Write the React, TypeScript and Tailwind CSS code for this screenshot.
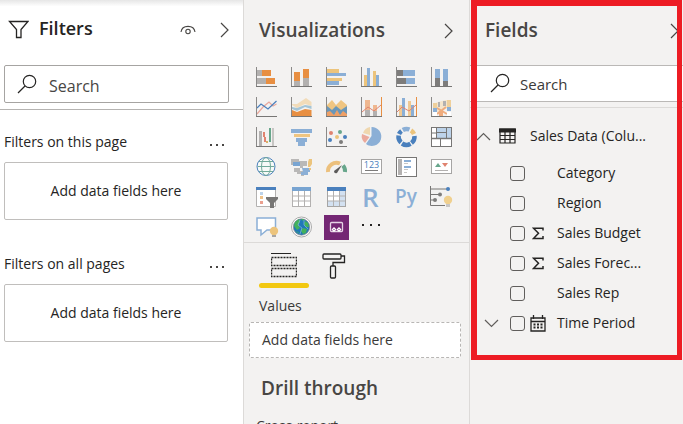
import type { ReactNode } from "react";

const BLUE = "#8bafd6";
const DEEP = "#4a80bd";
const ORANGE = "#e88f42";
const YELLOW = "#ecc47c";
const GRAY = "#b3b1b0";
const DARK = "#7d7c7b";
const PINK = "#e0836f";
const GREEN = "#67a68b";

type RectSpec = [number, number, number, number, string];

function Rects({ items }: { items: RectSpec[] }) {
  return (
    <>
      {items.map(([x, y, w, h, fill], i) => (
        <rect key={i} x={x} y={y} width={w} height={h} fill={fill} />
      ))}
    </>
  );
}

function Axis() {
  return (
    <>
      <rect x="0" y="0" width="1" height="20" fill="#8a8988" />
      <rect x="0" y="19" width="21" height="1" fill="#777675" />
    </>
  );
}

const visuals: { name: string; art: ReactNode }[] = [
  {
    name: "Stacked bar chart",
    art: (
      <>
        <Rects items={[[1, 3, 5, 6, GRAY], [6, 3, 9, 6, ORANGE], [1, 11, 9, 6, GRAY], [10, 11, 9, 6, ORANGE]]} />
        <Axis />
      </>
    ),
  },
  {
    name: "Stacked column chart",
    art: (
      <>
        <Rects items={[[3, 5, 6, 9, ORANGE], [3, 14, 6, 5, GRAY], [12, 2, 6, 9, ORANGE], [12, 11, 6, 8, GRAY]]} />
        <Axis />
      </>
    ),
  },
  {
    name: "Clustered bar chart",
    art: (
      <>
        <Rects items={[[1, 2, 12, 4, YELLOW], [1, 6, 19, 3, BLUE], [1, 11, 15, 3, YELLOW], [1, 14, 12, 4, BLUE]]} />
        <Axis />
      </>
    ),
  },
  {
    name: "Clustered column chart",
    art: (
      <>
        <Rects items={[[3, 8, 3, 11, YELLOW], [6, 1, 3, 18, BLUE], [12, 4, 3, 15, YELLOW], [15, 8, 3, 11, BLUE]]} />
        <Axis />
      </>
    ),
  },
  {
    name: "100% stacked bar chart",
    art: (
      <>
        <Rects items={[[1, 3, 6, 6, DARK], [7, 3, 12, 6, BLUE], [1, 11, 9, 6, DARK], [10, 11, 9, 6, BLUE]]} />
        <Axis />
      </>
    ),
  },
  {
    name: "100% stacked column chart",
    art: (
      <>
        <Rects items={[[4, 2, 5, 9, BLUE], [4, 11, 5, 8, DARK], [12, 2, 5, 12, BLUE], [12, 14, 5, 5, DARK]]} />
        <Axis />
      </>
    ),
  },
  {
    name: "Line chart",
    art: (
      <>
        <path d="M1 17 7 10 13 5 17 9 20.500 7" fill="none" stroke="#e9a79b" strokeWidth="1.200" />
        <path d="M1 11 5 7 12 12 20.500 4" fill="none" stroke={DEEP} strokeWidth="1.200" />
        <Axis />
      </>
    ),
  },
  {
    name: "Area chart",
    art: (
      <>
        <path d="M1 7 6 7 15 1 20.500 5V9L14 7 6 11 1 8Z" fill="#f2dcb9" />
        <path d="M1 10 6 11 14 8 20.500 9V12L14 10 6 14 1 12Z" fill="#a5c5d6" />
        <path d="M1 13 6 15 14 12 20.500 13V19H1Z" fill={ORANGE} />
        <Axis />
      </>
    ),
  },
  {
    name: "Stacked area chart",
    art: (
      <>
        <path d="M1 8 6 3 10 8 15 3 21 8V19H1Z" fill="#efc581" />
        <path d="M1 9 6 13 10 9 15 13 21 9V19H1Z" fill="#6a97b9" />
        <path d="M1 15 4 14 8 18 11 13 14 18 17 14 21 17V19H1Z" fill="#efa066" />
        <Axis />
      </>
    ),
  },
  {
    name: "Line and stacked column chart",
    art: (
      <>
        <Rects items={[[4, 3, 5, 10, "#efb78f"], [4, 13, 5, 6, GRAY], [12, 8, 4, 6, "#efb78f"], [12, 14, 4, 5, GRAY], [20, 0, 1, 19, ORANGE]]} />
        <path d="M1 15 7 10 13 14 20 8" fill="none" stroke={PINK} />
        <Axis />
      </>
    ),
  },
  {
    name: "Line and clustered column chart",
    art: (
      <>
        <Rects items={[[3, 8, 3, 11, "#f0c993"], [6, 1, 3, 18, BLUE], [12, 4, 3, 15, "#f0c993"], [15, 8, 3, 11, BLUE], [20, 0, 1, 19, ORANGE]]} />
        <path d="M1 15 6 10 13 14 20 8" fill="none" stroke={PINK} />
        <Axis />
      </>
    ),
  },
  {
    name: "Ribbon chart",
    art: (
      <>
        <path d="M2 7 7 5 15 3H20V10L16 11 9 15H2Z" fill="#f5e5cb" />
        <path d="M6 11 16 17M6 17 15 10" stroke="#efac7e" strokeWidth="2" />
        <Rects
          items={[
            [2, 6, 4, 5, "#efd09b"], [2, 11, 4, 4, BLUE], [2, 15, 4, 4, "#ffffff"],
            [7, 5, 2, 5, GRAY], [12, 4, 3, 5, GRAY], [8, 14, 4, 5, "#efac7e"],
            [16, 3, 4, 7, "#efd09b"], [16, 10, 4, 4, BLUE], [16, 15, 4, 4, "#ffffff"],
          ]}
        />
        <Axis />
      </>
    ),
  },
  {
    name: "Waterfall chart",
    art: (
      <>
        <Rects items={[[3, 4, 3, 15, GRAY], [7, 5, 2, 5, PINK], [8, 10, 2, 5, PINK], [10, 14, 2, 2, "#d8b269"], [13, 1, 2, 14, GREEN], [16, 1, 2, 18, "#c8c6c4"]]} />
        <Axis />
      </>
    ),
  },
  {
    name: "Funnel chart",
    art: <Rects items={[[0, 2, 21, 4, BLUE], [3, 7, 16, 3, "#efc581"], [5, 11, 11, 4, BLUE], [7, 15, 7, 4, BLUE]]} />,
  },
  {
    name: "Scatter chart",
    art: (
      <>
        <circle cx="5" cy="6" r="2" fill={PINK} />
        <circle cx="14" cy="5" r="2" fill={GREEN} />
        <circle cx="11" cy="10" r="2" fill={YELLOW} />
        <circle cx="19" cy="10" r="2" fill={DEEP} />
        <circle cx="4" cy="13" r="2" fill={DEEP} />
        <circle cx="15" cy="15" r="2" fill={DARK} />
        <Axis />
      </>
    ),
  },
  {
    name: "Pie chart",
    art: (
      <>
        <path d="M10.500 9V0A9.500 9.500 0 1 1 5 17Z" fill={BLUE} />
        <path d="M9 8 2 6A9 9 0 0 1 9 0Z" fill="#efd7ae" />
        <path d="M8.500 10 4 16A9 9 0 0 1 1 7Z" fill="#eba99c" />
      </>
    ),
  },
  {
    name: "Donut chart",
    art: (
      <g fill="none" strokeWidth="4.500">
        <path d="M6.800 3A8 8 0 0 1 13.500 2.500" stroke={BLUE} />
        <path d="M15 3.500A8 8 0 0 1 18 7" stroke={YELLOW} />
        <path d="M18.500 9A8 8 0 0 1 15.500 16" stroke={DEEP} />
        <path d="M14.500 16.700A8 8 0 0 1 6 16.500" stroke={DEEP} />
        <path d="M5 15.500A8 8 0 0 1 2.600 8.500" stroke={DEEP} />
        <path d="M3 7A8 8 0 0 1 5.500 4" stroke={DEEP} />
      </g>
    ),
  },
  {
    name: "Treemap",
    art: (
      <>
        <rect x=".500" y=".500" width="20" height="19" fill="#fff" stroke="#777675" />
        <rect x="6" y="1" width="14" height="10" fill="#bdd3ea" />
        <path d="M5.500 0V11M5.500 5.500H15.500M15.500 0V11M1 6H5M9.500 11V20" stroke="#777675" fill="none" />
        <path d="M0 11.500H21" stroke="#777675" strokeWidth="1.500" />
      </>
    ),
  },
  {
    name: "Map",
    art: (
      <>
        <circle cx="10" cy="9.500" r="9" fill="#f7faf8" stroke={DEEP} />
        <g fill="none" stroke="#72aa9a">
          <ellipse cx="10" cy="9.500" rx="4.500" ry="9" />
          <path d="M3 4.500H17M1.500 9.500H18.500M3 14.500H17" />
        </g>
      </>
    ),
  },
  {
    name: "Filled map",
    art: (
      <>
        <path d="M0 2H8V4H16V9H12V11H9V9H5V8H0Z" fill="#b9b8b7" />
        <path d="M2 5H9V9H2Z" fill="#78a4d1" />
        <path d="M3 11H9V14H13V19H10V17H6V15H3Z" fill="#b9b8b7" />
        <path d="M11 11H19V15H17V18H10V15H12Z" fill="#8bafd6" />
        <path d="M18 2H21V7L19 10H17V5ZM18 11H20V13H18Z" fill={YELLOW} />
      </>
    ),
  },
  {
    name: "Gauge",
    art: (
      <>
        <path d="M2 15A8.500 8.500 0 0 1 14 6.500" fill="none" stroke="#ecc07c" strokeWidth="4" />
        <path d="M17 8.500A8.500 8.500 0 0 1 19 15" fill="none" stroke={GREEN} strokeWidth="4" />
        <path d="M8 14 16 8 11 16Q8 17 8 14Z" fill="#5c5b5a" />
      </>
    ),
  },
  {
    name: "Card",
    art: (
      <>
        <rect x=".500" y="2.500" width="20" height="14" fill="#fff" stroke="#a6a5a4" />
        <text x="10.500" y="11" textAnchor="middle" fontSize="9" fill={DEEP} fontFamily="Open Sans, sans-serif">123</text>
        <rect x="4" y="13" width="13" height="1" fill={DARK} />
      </>
    ),
  },
  {
    name: "Multi-row card",
    art: (
      <>
        <rect x=".500" y=".500" width="20" height="19" fill="#fff" stroke="#777675" />
        <Rects items={[[2, 2, 4, 16, GRAY], [8, 3, 7, 2, BLUE], [8, 6, 4, 1, "#c8c6c4"], [8, 9, 7, 2, BLUE], [8, 12, 4, 1, "#c8c6c4"], [8, 15, 3, 1, "#c8c6c4"]]} />
      </>
    ),
  },
  {
    name: "KPI",
    art: (
      <>
        <rect x=".500" y="2.500" width="20" height="14" fill="#fff" stroke="#a6a5a4" />
        <path d="M4 10 7 6 10 10Z" fill={GREEN} />
        <path d="M11 6H17L14 10Z" fill={PINK} />
        <rect x="4" y="13" width="13" height="1" fill={GRAY} />
      </>
    ),
  },
  {
    name: "Slicer",
    art: (
      <>
        <path d="M.500 1V19.500H19.500V1" fill="#fff" stroke={GRAY} />
        <Rects items={[[0, 0, 20, 3, DEEP], [4, 5, 3, 3, "#bdd3ea"], [4, 9, 3, 3, "#efc28a"], [4, 14, 3, 3, "#eba08f"]]} />
        <path d="M10 10H22V12L18 16V21H14V16L10 12Z" fill="#777675" />
      </>
    ),
  },
  {
    name: "Table",
    art: (
      <>
        <rect x="1.500" y=".500" width="18" height="19" fill="#fff" stroke={GRAY} />
        <rect x="1" y="0" width="19" height="4" fill="#78a4d1" />
        <path d="M2 9H19M2 14H19M7.500 4V19M13.500 4V19" stroke={GRAY} />
      </>
    ),
  },
  {
    name: "Matrix",
    art: (
      <>
        <rect x="1.500" y=".500" width="18" height="19" fill="#fff" stroke="#a6a5a4" />
        <Rects items={[[13, 4, 6, 15, "#d3e1f1"], [2, 14, 11, 5, "#d3e1f1"], [1, 0, 19, 4, DEEP]]} />
        <path d="M2 9H19M2 14H19M7.500 4V19M13.500 4V19" stroke={GRAY} />
      </>
    ),
  },
  {
    name: "R script visual",
    art: (
      <text x="1" y="20" fontSize="26" fontWeight="600" fill={BLUE} fontFamily="Open Sans, sans-serif">R</text>
    ),
  },
  {
    name: "Python visual",
    art: (
      <text x="-1" y="16" fontSize="19" fontWeight="600" fill={BLUE} fontFamily="Open Sans, sans-serif">Py</text>
    ),
  },
  {
    name: "Key influencers",
    art: (
      <>
        <path d="M-.500 -1V18.500H14M0 2H17M0 7.500H9M0 13H5" fill="none" stroke="#777675" />
        <circle cx="17" cy="2" r="2" fill={DEEP} />
        <circle cx="9" cy="7.500" r="2" fill={DARK} />
        <circle cx="4" cy="13" r="2" fill={DARK} />
        <circle cx="17" cy="13" r="4.200" fill="#f0d08e" />
        <rect x="15" y="17" width="4" height="3" fill="#c8c6c4" />
      </>
    ),
  },
  {
    name: "Q&A",
    art: (
      <>
        <path d="M1 1H19.500V13H11L5 18V13H1Z" fill="#fff" stroke={BLUE} strokeWidth="1.500" />
        <circle cx="18" cy="14" r="4.200" fill="#ecc47c" />
        <rect x="16" y="18" width="4" height="2" fill="#a6a5a4" />
      </>
    ),
  },
  {
    name: "ArcGIS map",
    art: (
      <>
        <circle cx="10.500" cy="10" r="10" fill="#fff" stroke="#aaa" />
        <circle cx="10.500" cy="10" r="8.200" fill="#2078b8" stroke="#8b8a89" strokeWidth=".700" />
        <path d="M4 5 8 2 9 5 7 8 9 11 6 13 3 9ZM14 4 17 6 18 10 15 10 13 7ZM12 11 16 12 15 16 12 17 10 14ZM10 2 13 2 12 4ZM4 14 7 15 9 17Z" fill="#43b15b" />
        <path d="M9 3 7 8 11 11 9 17M13 3 13 8 17 12" fill="none" stroke="#9bc8e4" strokeWidth=".600" />
      </>
    ),
  },
  {
    name: "Power Apps",
    art: (
      <>
        <rect x="-2" y="-2" width="25" height="25" fill="#742774" />
        <rect x="4.500" y="5.500" width="12" height="9" rx="1" fill="none" stroke="#e6d3e6" strokeWidth="1.300" />
        <path d="M5.500 12.500 8 10 10.500 12.500 8 15Z" fill="#fff" />
        <path d="M10.500 12.500 13 10 15.500 12.500 13 15Z" fill="#fff" />
        <path d="M7.500 12.500H8.500M12.500 12.500H13.500" stroke="#742774" />
      </>
    ),
  },
  {
    name: "More visuals",
    art: <Rects items={[[1, 7, 2, 2, "#252423"], [9, 7, 2, 2, "#252423"], [17, 7, 2, 2, "#252423"]]} />,
  },
];

function Chevron({ dir }: { dir: "right" | "up" | "down" }) {
  if (dir === "right") {
    return (
      <svg width="9" height="16" viewBox="0 0 9 16" fill="none" stroke="#484644" strokeWidth="1.200" className="shrink-0">
        <path d="M1 1 8 8 1 15" />
      </svg>
    );
  }
  return (
    <svg width="15" height="9" viewBox="0 0 15 9" fill="none" stroke="#605e5c" strokeWidth="1.200">
      <path d={dir === "up" ? "M1 8 7.500 1.500 14 8" : "M1 1 7.500 7.500 14 1"} />
    </svg>
  );
}

function SearchIcon() {
  return (
    <svg width="20" height="20" viewBox="0 0 20 20" fill="none" stroke="#252423" strokeWidth="1.200" className="shrink-0">
      <circle cx="12.500" cy="7.500" r="6.200" />
      <path d="M8 12 1 19" />
    </svg>
  );
}

function FilterGroup({ title }: { title: string }) {
  return (
    <section className="flex flex-col gap-2.5 pr-[15px] pl-1">
      <div className="flex h-5 items-center justify-between">
        <h3>{title}</h3>
        <button aria-label={`${title}: more options`} className="pr-1">
          <svg width="15" height="10" viewBox="0 0 15 10" fill="#484644">
            <path d="M1 7H3V9H1ZM7 7H9V9H7ZM13 7H15V9H13Z" />
          </svg>
        </button>
      </div>
      <div className="flex h-[58px] items-center justify-center rounded-xs border border-[#c0bebc]">
        Add data fields here
      </div>
    </section>
  );
}

function FiltersPane() {
  return (
    <aside className="flex w-61 shrink-0 flex-col border-r border-[#dcdad8] bg-white text-[#252423]">
      <div className="border-b border-[#b5b3b1] pb-1.5">
        <header className="flex h-[65px] items-center bg-linear-to-b from-[#e6e6e6] via-white via-10% to-white pr-3.5 pb-1.5 pl-2">
          <svg width="21" height="19" viewBox="0 0 21 19" fill="none" stroke="#252423" strokeWidth="1.300">
            <path d="M1.500 1.500H20L13 9.500V17.500H8.500V9.500Z" />
          </svg>
          <h2 className="ml-2.5 flex-1 pb-1 text-lg font-semibold">Filters</h2>
          <button aria-label="Show filters">
            <svg width="16" height="10" viewBox="0 0 16 10" fill="none" stroke="#484644" strokeWidth="1.100">
              <path d="M1 7C2 -.500 14 -.500 15 7" />
              <circle cx="8" cy="6.500" r="2.200" />
            </svg>
          </button>
          <button aria-label="Collapse filters" className="ml-6">
            <Chevron dir="right" />
          </button>
        </header>
        <label className="mr-3.5 ml-1 flex h-[38px] items-center gap-3 rounded-xs border border-[#a6a4a2] px-3">
          <SearchIcon />
          <input aria-label="Search filters" placeholder="Search" className="min-w-0 flex-1 pt-1 text-base outline-none placeholder:text-[#484644]" />
        </label>
      </div>
      <div className="flex flex-col gap-[34px] pt-[22px]">
        <FilterGroup title="Filters on this page" />
        <FilterGroup title="Filters on all pages" />
      </div>
    </aside>
  );
}

function VisualizationsPane() {
  return (
    <section className="flex w-[226px] shrink-0 flex-col border-r border-[#dcdad8] bg-[#f3f2f1] text-[#3b3a39]">
      <header className="flex h-[67px] shrink-0 items-center justify-between pr-4 pb-1.5 pl-[15px]">
        <h2 className="text-[19px] font-semibold text-[#484644]">Visualizations</h2>
        <button aria-label="Collapse visualizations">
          <Chevron dir="right" />
        </button>
      </header>
      <div className="grid shrink-0 grid-cols-[repeat(6,35px)] gap-y-2.5 border-b border-[#dcdad8] pb-[5px] pl-3">
        {visuals.map((v) => (
          <button key={v.name} aria-label={v.name} className="h-5 w-[21px]">
            <svg width="21" height="20" viewBox="0 0 21 20" className="overflow-visible">
              {v.art}
            </svg>
          </button>
        ))}
      </div>
      <div className="flex shrink-0 pl-[15px]">
        <button aria-label="Fields" className="flex w-[50px] flex-col items-center gap-1 pt-2.5">
          <svg width="26" height="26" viewBox="0 0 26 26" fill="none" stroke="#252423">
            <path d="M0 .500H20" />
            <path d="M.500 4.500H25.500V12.500H.500ZM.500 15.500H25.500V23.500H.500Z" strokeWidth="1.400" strokeDasharray="2 1" />
          </svg>
          <span className="h-[5px] w-full rounded-full bg-[#f2c811]" />
        </button>
        <button aria-label="Format" className="flex w-[50px] justify-center pt-2.5">
          <svg width="24" height="26" viewBox="0 0 24 26" fill="none" stroke="#252423" strokeWidth="1.300">
            <rect x="1" y="1" width="18" height="5" rx="1" />
            <path d="M19 3H22.500V9.500H11V13" />
            <rect x="8.500" y="13" width="5" height="12" rx="1" />
          </svg>
        </button>
      </div>
      <h3 className="mt-1.5 shrink-0 pl-[15px] leading-6">Values</h3>
      <div className="mx-[5px] mt-1 mr-2 flex h-9 shrink-0 items-center rounded-xs border border-dashed border-[#b8b6b4] bg-white px-3">
        Add data fields here
      </div>
      <h2 className="mt-4 shrink-0 pl-[17px] text-[19px] leading-7 font-semibold text-[#484644]">Drill through</h2>
      <h3 className="mt-3 shrink-0 pl-3 leading-6">Cross-report</h3>
    </section>
  );
}

type Field = { name: string; kind?: "sum" | "date" };

const fields: Field[] = [
  { name: "Category" },
  { name: "Region" },
  { name: "Sales Budget", kind: "sum" },
  { name: "Sales Forec...", kind: "sum" },
  { name: "Sales Rep" },
  { name: "Time Period", kind: "date" },
];

function FieldIcon({ kind }: { kind?: Field["kind"] }) {
  if (kind === "sum") {
    return (
      <svg width="12" height="13" viewBox="0 0 12 13" fill="none" stroke="#252423" strokeWidth="1.500">
        <path d="M11 3.500V1.200H1.500L6.500 6.200 1.500 11.500H11V9" />
      </svg>
    );
  }
  if (kind === "date") {
    return (
      <svg width="16" height="17" viewBox="0 0 16 17" fill="none" stroke="#252423" strokeWidth="1.300">
        <path d="M1 3H15V16H1ZM1 6.500H15M3.500 0V4M12.500 0V4" />
        <path d="M3.500 9.500H12.500M3.500 12.500H12.500" strokeWidth="2" strokeDasharray="2 1.500" />
      </svg>
    );
  }
  return null;
}

function FieldsPane() {
  return (
    <section className="relative min-w-0 flex-1 overflow-hidden bg-[#f3f2f1] text-[#252423]">
      <header className="flex h-[65px] items-center justify-between pr-1 pb-1 pl-[15px]">
        <h2 className="text-[19px] font-semibold text-[#484644]">Fields</h2>
        <button aria-label="Collapse fields">
          <Chevron dir="right" />
        </button>
      </header>
      <div className="border-b border-[#dcdad8] pb-[5px]">
        <label className="flex h-[37px] items-center gap-2.5 border-y border-[#bab8b6] bg-white pb-0.5 pl-5">
          <SearchIcon />
          <input aria-label="Search fields" placeholder="Search" className="min-w-0 flex-1 pt-1 text-[15px] outline-none placeholder:text-[#3b3a39]" />
        </label>
      </div>
      <div className="flex h-12 items-center pt-2 pl-1.5">
        <button aria-label="Collapse table" className="w-[23px]">
          <Chevron dir="up" />
        </button>
        <svg width="17" height="16" viewBox="0 0 17 16" fill="none" stroke="#252423" strokeWidth="1.200" className="shrink-0">
          <path d="M1 1H16V15H1ZM1 7.500H16M1 11.500H16M6 4V15M11 4V15" />
          <path d="M0 2.500H17" strokeWidth="4" />
        </svg>
        <span className="ml-3.5 whitespace-nowrap">Sales Data (Colu...</span>
      </div>
      <ul className="pt-0.5">
        {fields.map((f) => (
          <li key={f.name} className="flex h-[30px] items-center pl-3.5">
            <span className="flex w-[26px]">
              {f.kind === "date" && (
                <button aria-label={`Expand ${f.name}`}>
                  <Chevron dir="down" />
                </button>
              )}
            </span>
            <label className="flex items-center whitespace-nowrap">
              <input type="checkbox" className="size-[15px] appearance-none rounded-[3px] border border-[#605e5c]" />
              <span className="mr-2.5 ml-1 flex w-[18px] justify-center">
                <FieldIcon kind={f.kind} />
              </span>
              {f.name}
            </label>
          </li>
        ))}
      </ul>
      <div className="pointer-events-none absolute top-0 right-px left-px h-[360px] border-[5px] border-t-[6px] border-l-[6px] border-[#ed1c24]" />
    </section>
  );
}

export default function App() {
  return (
    <main className="flex h-screen w-full overflow-hidden font-['Open_Sans','Noto_Sans',sans-serif] text-sm">
      <FiltersPane />
      <VisualizationsPane />
      <FieldsPane />
    </main>
  );
}
